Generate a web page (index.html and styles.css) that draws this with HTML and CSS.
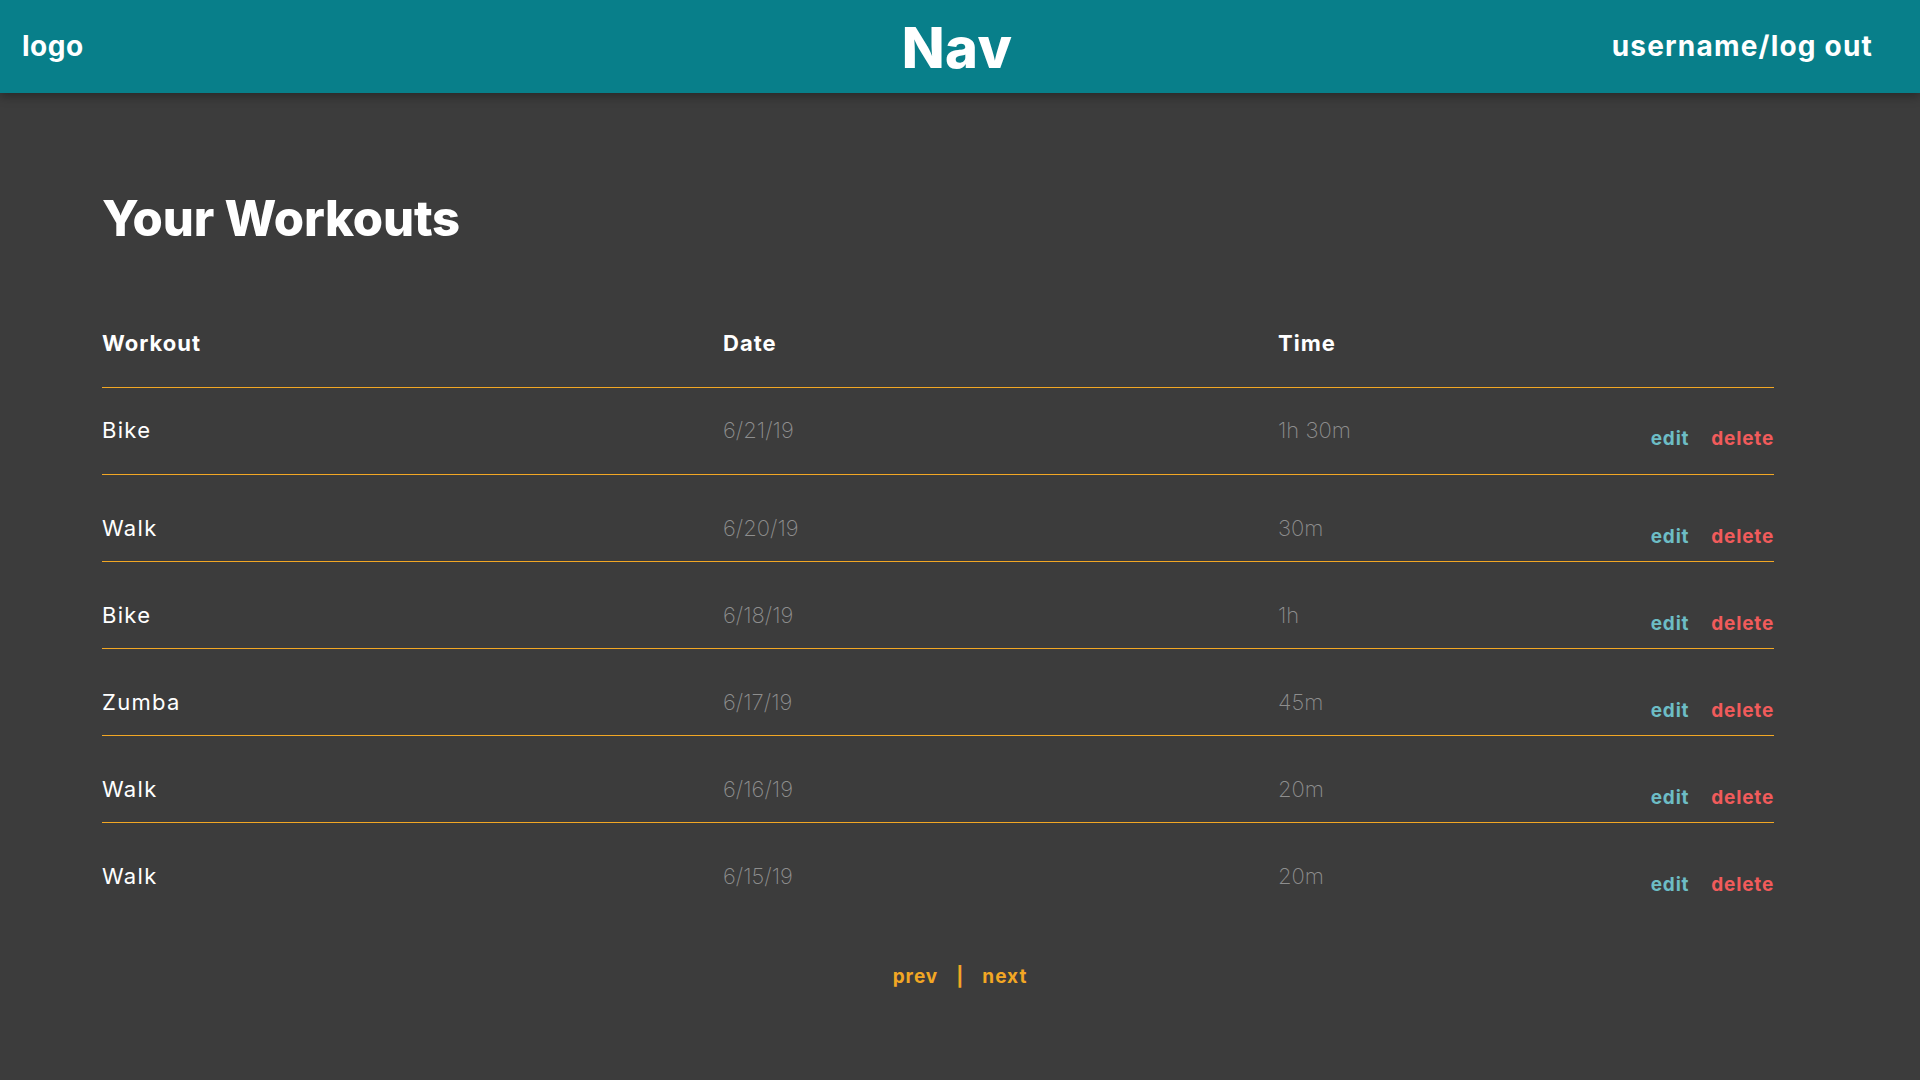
FILE: index.html
```html
<!DOCTYPE html>
<html lang="en">
<head>
<meta charset="utf-8">
<title>Your Workouts</title>
<link rel="stylesheet" href="styles.css">
</head>
<body>
<header class="topbar">
  <div class="logo">logo</div>
  <div class="nav">Nav</div>
  <div class="user">username/log out</div>
</header>
<main class="content">
  <h1 class="title">Your Workouts</h1>
  <div class="table">
    <div class="row head">
      <div class="cell">Workout</div>
      <div class="cell">Date</div>
      <div class="cell">Time</div>
      <div class="cell"></div>
    </div>
    <div class="row first">
      <div class="cell name">Bike</div>
      <div class="cell dim">6/21/19</div>
      <div class="cell dim">1h 30m</div>
      <div class="cell actions"><a class="edit">edit</a><a class="delete">delete</a></div>
    </div>
    <div class="row">
      <div class="cell name">Walk</div>
      <div class="cell dim">6/20/19</div>
      <div class="cell dim">30m</div>
      <div class="cell actions"><a class="edit">edit</a><a class="delete">delete</a></div>
    </div>
    <div class="row">
      <div class="cell name">Bike</div>
      <div class="cell dim">6/18/19</div>
      <div class="cell dim">1h</div>
      <div class="cell actions"><a class="edit">edit</a><a class="delete">delete</a></div>
    </div>
    <div class="row">
      <div class="cell name">Zumba</div>
      <div class="cell dim">6/17/19</div>
      <div class="cell dim">45m</div>
      <div class="cell actions"><a class="edit">edit</a><a class="delete">delete</a></div>
    </div>
    <div class="row">
      <div class="cell name">Walk</div>
      <div class="cell dim">6/16/19</div>
      <div class="cell dim">20m</div>
      <div class="cell actions"><a class="edit">edit</a><a class="delete">delete</a></div>
    </div>
    <div class="row last">
      <div class="cell name">Walk</div>
      <div class="cell dim">6/15/19</div>
      <div class="cell dim">20m</div>
      <div class="cell actions"><a class="edit">edit</a><a class="delete">delete</a></div>
    </div>
  </div>
</main>
<nav class="pager"><a>prev</a><span class="sep">|</span><a>next</a></nav>
</body>
</html>
```
FILE: styles.css
```css
* { box-sizing: border-box; }
html, body { margin: 0; padding: 0; }
body {
  background: #3c3c3c;
  font-family: Inter, "Open Sans", sans-serif;
  color: #fff;
  min-height: 1080px;
}
.topbar {
  height: 93px;
  background: #087f8a;
  display: grid;
  grid-template-columns: 1fr auto 1fr;
  align-items: center;
  padding: 0 22px;
  box-shadow: 0 3px 10px rgba(0,0,0,0.35);
  position: relative;
}
.logo {
  font-size: 28px;
  font-weight: 700;
  line-height: 1;
  letter-spacing: 0.5px;
  margin-top: -2px;
}
.nav {
  font-size: 56px;
  font-weight: 800;
  line-height: 1;
  letter-spacing: 0.5px;
  margin-top: 3px;
  margin-right: 6px;
}
.user {
  justify-self: end;
  font-size: 28px;
  font-weight: 700;
  line-height: 1;
  letter-spacing: 1.2px;
  margin-top: -2px;
  margin-right: 25px;
}
.content {
  padding: 96px 146px 0 102px;
}
.title {
  margin: 0;
  font-size: 49px;
  font-weight: 800;
  line-height: 60px;
  letter-spacing: -0.2px;
}
.table {
  margin-top: 79px;
}
.row {
  display: grid;
  grid-template-columns: 621px 555px 1fr auto;
  height: 87px;
  padding-top: 38px;
  border-bottom: 1px solid #f2a724;
  font-size: 22px;
  line-height: 30px;
}
.row.head {
  height: 60px;
  padding-top: 0;
  font-weight: 700;
  font-size: 22px;
  letter-spacing: 1px;
}
.row.first { padding-top: 27px; }
.row.last { border-bottom: none; }
.cell.name {
  font-weight: 400;
  letter-spacing: 1.3px;
}
.cell.dim {
  color: #8e8e8e;
  font-weight: 200;
}
.actions {
  margin-top: 9px;
  font-size: 19px;
  font-weight: 700;
  letter-spacing: 0.8px;
  display: flex;
  gap: 22px;
}
.edit { color: #6dbdc5; }
.delete { color: #f15b5b; }
.pager {
  margin-top: 52px;
  display: flex;
  justify-content: center;
  gap: 18px;
  color: #f2a724;
  font-size: 19px;
  font-weight: 700;
  letter-spacing: 1px;
  line-height: 30px;
}
```
